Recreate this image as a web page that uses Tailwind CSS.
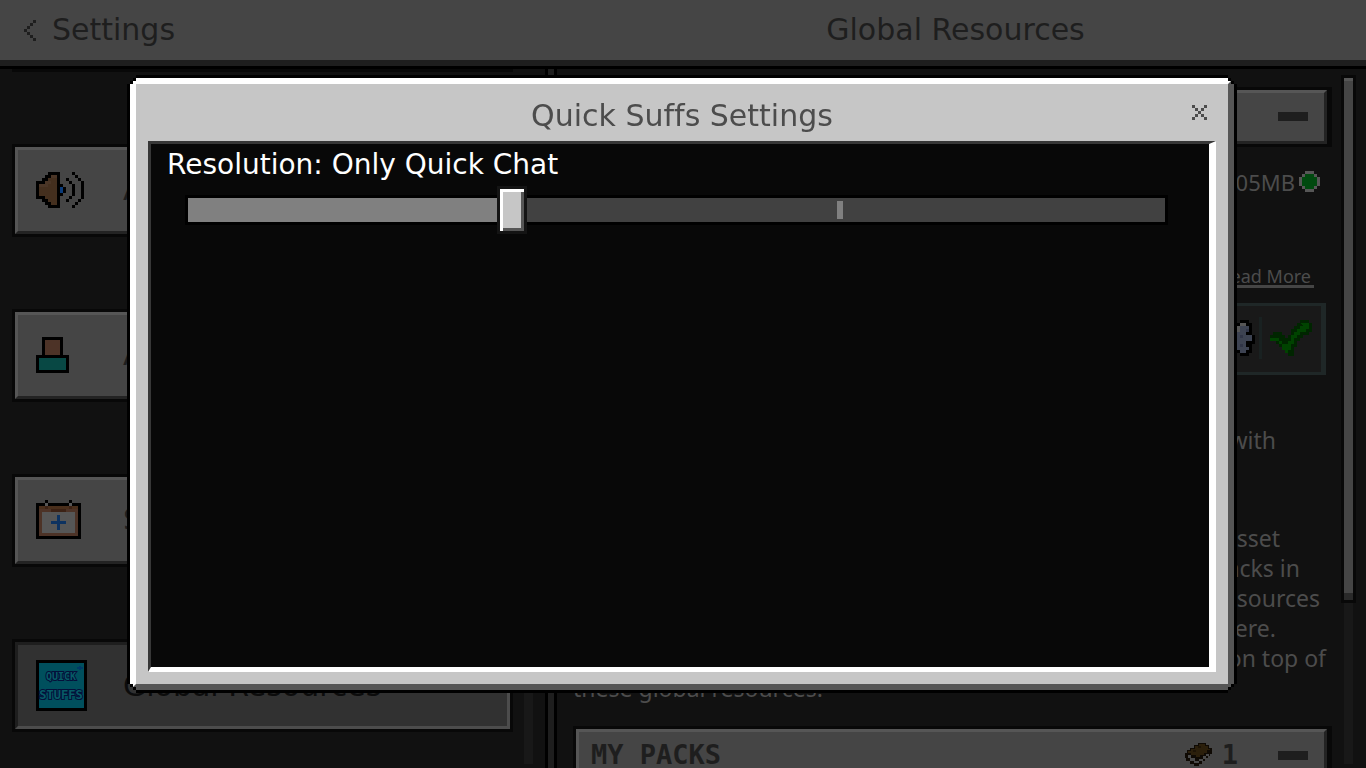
<!DOCTYPE html>
<html lang="en">
<head>
    <meta charset="UTF-8">
    <meta name="viewport" content="width=device-width, initial-scale=1.0">
    <title>Quick Suffs Settings</title>
    <script src="https://cdn.jsdelivr.net/npm/@tailwindcss/browser@4"></script>
</head>
<body class="h-screen overflow-hidden bg-[#111111] font-['DejaVu_Sans',sans-serif] [font-variant-ligatures:none] text-[#1e1e1e] flex flex-col">
    <!-- Top bar -->
    <header class="flex shrink-0 h-[69px] items-center bg-[#454545] border-b-3 border-black">
        <div class="flex w-[39.9%] h-full items-center pl-6 border-b-6 border-[#1e1e1e]">
            <button class="flex items-center gap-4 text-[30px] leading-8" type="button">
                <svg class="w-3 h-[21px]" viewBox="0 0 4 7" shape-rendering="crispEdges" fill="#1e1e1e"><path d="M3 0h1v1h-1zM2 1h1v1h-1zM1 2h1v1h-1zM0 3h1v1h-1zM1 4h1v1h-1zM2 5h1v1h-1zM3 6h1v1h-1z"/></svg>
                Settings
            </button>
        </div>
        <div class="flex flex-1 h-full items-center justify-center border-b-6 border-[#1e1e1e]">
            <h1 class="text-[30px] leading-8">Global Resources</h1>
        </div>
    </header>

    <main class="flex flex-1 min-h-0">
        <!-- Settings sections -->
        <section class="flex w-[39.9%] overflow-hidden pl-3 pr-3">
            <nav class="flex flex-1 flex-col gap-[72px] pr-[11px]">
                <div class="shrink-0 h-[3px] bg-[#080808]"></div>
                <button type="button" class="shrink-0 h-[93px] border-3 border-[#080808] text-left">
                    <span class="flex h-full items-center border-3 border-t-[#565656] border-l-[#565656] border-b-[#232323] border-r-[#232323] bg-[#454545] pl-[18px] pb-0.5 text-[30px]">
                        <span class="w-[87px]">
                            <svg class="w-12 h-9" viewBox="0 0 16 12" shape-rendering="crispEdges">
                                <path fill="#442f1e" d="M1 4h2v-1h1v-1h1v-1h2v10h-2v-1h-1v-1h-1v-1h-2z"/>
                                <path fill="#4a3526" d="M3 3h2v1h-1v1h-3v-1h2zM5 1h2v1h-2z"/>
                                <path fill="#000" d="M4 0h4v12h-4v-1h3v-10h-3zM3 1h2v1h-2zM2 2h2v1h-2zM0 3h3v1h-2v4h2v1h-3zM2 9h2v1h-2zM3 10h2v1h-2zM8 4h1v1h1v2h-1v1h-1z"/>
                                <path fill="#0a3a78" d="M8 5h1v2h-1z"/>
                                <path fill="#000" d="M10 2h1v1h-1zM11 3h1v1h-1zM12 4h1v4h-1zM11 8h1v1h-1zM10 9h1v1h-1zM12 0h1v1h-1zM13 1h1v1h-1zM14 2h1v1h-1zM15 3h1v6h-1zM14 9h1v1h-1zM13 10h1v1h-1zM12 11h1v1h-1z"/>
                            </svg>
                        </span>
                        Audio
                    </span>
                </button>
                <button type="button" class="shrink-0 h-[93px] border-3 border-[#080808] text-left">
                    <span class="flex h-full items-center border-3 border-t-[#565656] border-l-[#565656] border-b-[#232323] border-r-[#232323] bg-[#454545] pl-[18px] pb-0.5 text-[30px]">
                        <span class="w-[87px]">
                            <svg class="w-[33px] h-9" viewBox="0 0 11 12" shape-rendering="crispEdges">
                                <path fill="#000" d="M2 0h7v6h2v6h-11v-6h2z"/>
                                <path fill="#4d3327" d="M3 1h5v5h-5z"/>
                                <path fill="#084844" d="M1 7h9v4h-9z"/>
                            </svg>
                        </span>
                        Account
                    </span>
                </button>
                <button type="button" class="shrink-0 h-[93px] border-3 border-[#080808] text-left">
                    <span class="flex h-full items-center border-3 border-t-[#565656] border-l-[#565656] border-b-[#232323] border-r-[#232323] bg-[#454545] pl-[18px] pb-0.5 text-[30px]">
                        <span class="w-[87px]">
                            <svg class="w-[45px] h-[39px]" viewBox="0 0 15 13" shape-rendering="crispEdges">
                                <path fill="#000" d="M0 1h15v12h-15zM3 0h1v1h-1zM11 0h1v1h-1z"/>
                                <path fill="#4d3327" d="M1 2h13v10h-13z"/>
                                <path fill="#4a2f1c" d="M1 2h13v1h-13z"/>
                                <path fill="#3c2215" d="M5 3h5v1h-5zM3 2h1v1h-1zM11 2h1v1h-1z"/>
                                <path fill="#565656" d="M2 4h11v7h-11zM3 1h1v1h-1zM11 1h1v1h-1z"/>
                                <path fill="#0d3260" d="M7 5h1v2h2v1h-2v2h-1v-2h-2v-1h2z"/>
                            </svg>
                        </span>
                        Storage
                    </span>
                </button>
                <button type="button" class="shrink-0 h-[93px] border-3 border-[#080808] text-left">
                    <span class="flex h-full items-center border-3 border-t-[#1e1e1e] border-l-[#1e1e1e] border-b-[#4c4c4c] border-r-[#4c4c4c] bg-[#313131] pl-[18px] text-[30px] text-[#0c0c0c]">
                        <span class="w-[87px]">
                            <svg class="size-[51px]" viewBox="0 0 51 51" shape-rendering="crispEdges" font-family="DejaVu Sans Mono, monospace" font-weight="700" fill="#075c66" stroke="#04103a" stroke-width="2" paint-order="stroke" text-anchor="middle">
                                <path stroke="none" fill="#000" d="M0 0h51v51h-51z"/>
                                <path stroke="none" fill="#004f5d" d="M3 3h45v45h-45z"/>
                                <path stroke="none" fill="#003a66" d="M43 6h2v1h2v2h-2v1h-2v-1h-2v-2h2z"/>
                                <text x="25" y="20" font-size="10">QUICK</text>
                                <text x="25" y="39" font-size="12">STUFFS</text>
                            </svg>
                        </span>
                        Global Resources
                    </span>
                </button>
            </nav>
            <div class="w-[9px] mt-3 mb-1 bg-[#181818]"></div>
        </section>

        <div class="w-3 shrink-0 border-x-3 border-black bg-[#1e1e1e]"></div>

        <!-- Resource packs -->
        <section class="flex flex-1 overflow-hidden pl-4 pr-[10px] font-['Noto_Sans',sans-serif] text-[23px] leading-[30px] text-[#4c4c4c]">
            <div class="flex flex-1 flex-col items-end pt-[18px]">
                <button type="button" aria-label="Collapse" class="w-full shrink-0 h-[60px] border-3 border-r-5 border-[#080808]">
                    <span class="flex h-full items-center justify-end border-3 border-t-[#565656] border-l-[#565656] border-b-[#232323] border-r-[#232323] bg-[#454545] pb-0.5 pr-4">
                        <span class="w-[30px] h-[9px] bg-[#1e1e1e]"></span>
                    </span>
                </button>
                <div class="flex shrink-0 items-center gap-1 mt-6 h-[21px] pr-3 text-[22px]">
                    05MB
                    <svg class="size-[21px]" viewBox="0 0 7 7" shape-rendering="crispEdges"><path fill="#565656" d="M2 0h3v1h1v1h1v3h-1v1h-1v1h-3v-1h-1v-1h-1v-3h1v-1h1z"/><path fill="#00490f" d="M2 1h3v1h1v3h-1v1h-3v-1h-1v-3h1z"/></svg>
                </div>
                <a href="#" class="shrink-0 mt-[75px] mr-[18px] pr-[3px] border-b-3 border-[#454545] text-[18px] leading-[18px]">Read More</a>
                <div class="flex shrink-0 mt-[15px] mr-[6px] h-[72px] w-60 items-center justify-end border-3 border-r-5 border-[#1f2727] bg-[#191919] pb-0.5 pr-[9px]">
                    <button type="button" aria-label="Pack settings">
                        <svg class="w-9 h-9" viewBox="0 0 12 12" shape-rendering="crispEdges">
                            <path fill="#000" d="M2 0h3v1h2v-1h3v1h1v4h1v3h-1v3h-1v1h-3v-1h-2v1h-3v-1h-1v-3h-1v-3h1v-4h1z"/>
                            <path fill="#3d4352" d="M2 1h3v1h2v-1h2v1h1v2h-1v1h2v2h-2v2h1v1h-1v1h-2v-1h-2v1h-3v-2h-1v-5h1z"/>
                            <path fill="#565656" d="M7 1h2v1h-2zM6 2h1v2h-1z"/>
                            <path fill="#303547" d="M9 3h1v1h-1zM7 5h1v1h-1zM7 8h1v1h-1z"/>
                        </svg>
                    </button>
                    <div class="ml-1 mr-2 w-[3px] h-[42px] bg-[#192121]"></div>
                    <button type="button" aria-label="Active">
                        <svg class="w-[42px] h-9" viewBox="0 0 14 12" shape-rendering="crispEdges">
                            <path fill="#002500" d="M10 0h3v1h1v3h-1v1h-2v1h-1v1h-1v2h-1v3h-2v-1h-1v-1h-1v-1h-1v-1h-1v-1h-1v-1h-1v-1h1v-1h3v1h1v1h1v-1h1v-2h1v-1h1v-1h1z"/>
                            <path fill="#004300" d="M10 1h3v2h-1v1h-2v1h-1v1h-1v2h-1v2h-1v1h-1v-1h-1v-2h-1v-1h-3v-1h3v1h1v1h2v-1h1v-2h1v-1h1v-1h1v-1h1z"/>
                        </svg>
                    </button>
                </div>
                <p class="shrink-0 mt-[50px] pr-14">with</p>
                <p class="shrink-0 mt-[68px] flex flex-col items-end">
                    <span class="pr-13">asset</span>
                    <span class="pr-8">packs in</span>
                    <span class="pr-3">resources</span>
                    <span class="pr-14">here.</span>
                    <span class="pr-[6px]">on top of</span>
                </p>
                <p class="w-full shrink-0">these global resources.</p>
                <button type="button" class="w-full shrink-0 mt-[23px] h-[60px] border-3 border-r-5 border-[#080808] font-['DejaVu_Sans_Mono',monospace] text-[27px] leading-6 font-bold text-[#1e1e1e]">
                    <span class="flex h-full items-center border-3 border-t-[#565656] border-l-[#565656] border-b-[#232323] border-r-[#232323] bg-[#454545] pl-3 pb-0.5 pr-4">
                        <span class="flex-1 text-left">MY PACKS</span>
                        <svg class="w-[27px] h-6" viewBox="0 0 27 24" shape-rendering="crispEdges">
                            <path fill="#0f0a04" d="M9 2h4v-2h8v2h3v3h3v6h-2v2h-2v2h-3v3h-3v3h-3v2h-5v-2h-4v-3h-4v-3h-1v-5h2v-3h3v-2h4z"/>
                            <path fill="#2b1f0b" d="M10 3h4v-2h6v2h3v3h2v1h-3v3h-3v2h-4v2h-4v-2h-5v-2h-3v-2h3v-2h4z"/>
                            <path fill="#4a4a4a" d="M3 12h3v3h4v3h4v2h-5v-2h-4v-3h-2zM14 18v-2h4v-3h3v-2h3v2h-3v3h-3v2z"/>
                            <path fill="#1d1406" d="M13 3h3v2h-3zM8 7h3v2h-3z"/>
                        </svg>
                        <span class="ml-[10px] mr-[40px]">1</span>
                        <span class="w-[30px] h-[9px] bg-[#1e1e1e]"></span>
                    </span>
                </button>
            </div>
            <!-- Scroll bar -->
            <div class="flex flex-col items-center ml-[9px] mt-[6px] mb-1 w-[15px]">
                <div class="h-[528px] w-full shrink-0 border-3 border-[#080808] bg-[#454545]">
                    <div class="h-full border-t-3 border-b-7 border-t-[#565656] border-b-[#2a2a2a]"></div>
                </div>
                <div class="flex-1 w-[9px] bg-[#181818]"></div>
            </div>
        </section>
    </main>

    <!-- Settings dialog -->
    <div class="fixed inset-0 flex pl-[127px] pr-[129px] py-[75px]">
        <div role="dialog" aria-labelledby="dialog-title" class="flex flex-1 bg-black p-[3px] [clip-path:polygon(9px_0,calc(100%-9px)_0,calc(100%-9px)_3px,calc(100%-6px)_3px,calc(100%-6px)_6px,calc(100%-3px)_6px,calc(100%-3px)_9px,100%_9px,100%_calc(100%-9px),calc(100%-3px)_calc(100%-9px),calc(100%-3px)_calc(100%-6px),calc(100%-6px)_calc(100%-6px),calc(100%-6px)_calc(100%-3px),calc(100%-9px)_calc(100%-3px),calc(100%-9px)_100%,9px_100%,9px_calc(100%-3px),6px_calc(100%-3px),6px_calc(100%-6px),3px_calc(100%-6px),3px_calc(100%-9px),0_calc(100%-9px),0_9px,3px_9px,3px_6px,6px_6px,6px_3px,9px_3px)]">
            <div class="flex flex-1 flex-col border-6 border-t-white border-l-white border-b-[#565656] border-r-[#565656] bg-[#c6c6c6] px-3 pb-3 [clip-path:polygon(6px_0,calc(100%-6px)_0,calc(100%-6px)_3px,calc(100%-3px)_3px,calc(100%-3px)_6px,100%_6px,100%_calc(100%-6px),calc(100%-3px)_calc(100%-6px),calc(100%-3px)_calc(100%-3px),calc(100%-6px)_calc(100%-3px),calc(100%-6px)_100%,6px_100%,6px_calc(100%-3px),3px_calc(100%-3px),3px_calc(100%-6px),0_calc(100%-6px),0_6px,3px_6px,3px_3px,6px_3px)]">
                <div class="relative flex h-[57px] shrink-0 items-center justify-center pt-[6px] text-[#4c4c4c]">
                    <h2 id="dialog-title" class="text-[30px] leading-8">Quick Suffs Settings</h2>
                    <button type="button" aria-label="Close" class="absolute right-[9px] top-[21px]">
                        <svg class="size-[15px]" viewBox="0 0 5 5" shape-rendering="crispEdges" fill="#4c4c4c"><path d="M0 0h1v1h-1zM4 0h1v1h-1zM1 1h1v1h-1zM3 1h1v1h-1zM2 2h1v1h-1zM1 3h1v1h-1zM3 3h1v1h-1zM0 4h1v1h-1zM4 4h1v1h-1z"/></svg>
                    </button>
                </div>
                <div class="flex-1 border-t-3 border-l-3 border-r-7 border-b-5 border-t-[#373737] border-l-[#373737] border-r-white border-b-white bg-[#080808] pt-[5px] px-4">
                    <label for="resolution" class="block text-[28px] leading-8 text-white">Resolution: Only Quick Chat</label>
                    <div class="relative mt-[14px] ml-[18px] mr-[25px] h-[30px] border-3 border-black bg-[#414141]">
                        <div class="h-full bg-[#808080]" style="width: 33.3%"></div>
                        <div class="absolute top-[3px] h-[18px] w-[6px] -translate-x-1/2 bg-[#808080]" style="left: 66.7%"></div>
                        <input id="resolution" type="range" min="0" max="3" step="1" value="1" class="absolute -left-4 -top-3 m-0 h-12 w-[calc(100%+28px)] appearance-none bg-transparent [&::-webkit-slider-thumb]:appearance-none [&::-webkit-slider-thumb]:h-12 [&::-webkit-slider-thumb]:w-[30px] [&::-webkit-slider-thumb]:border-3 [&::-webkit-slider-thumb]:border-[#141414] [&::-webkit-slider-thumb]:bg-[#c6c6c6] [&::-webkit-slider-thumb]:shadow-[inset_3px_3px_0_#fff,inset_-3px_-3px_0_#565656]">
                    </div>
                </div>
            </div>
        </div>
    </div>
</body>
</html>
